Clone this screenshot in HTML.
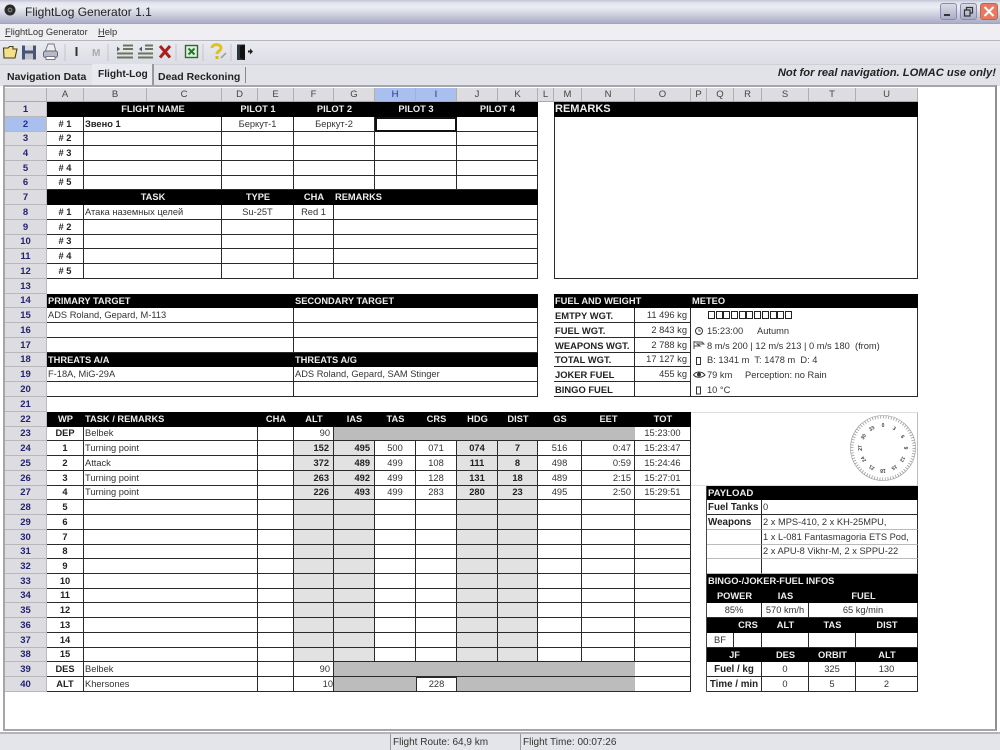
<!DOCTYPE html>
<html><head><meta charset="utf-8"><title>FlightLog Generator 1.1</title>
<style>
html,body{margin:0;padding:0;width:1000px;height:750px;overflow:hidden;background:#fff;font-family:"Liberation Sans","Noto Sans CJK SC",sans-serif;color:#222}
.abs{position:absolute;white-space:nowrap}
#title{left:0;top:0;width:1000px;height:23px;background:linear-gradient(#c3c5d8 0,#e4e5ee 3px,#ecedf3 7px,#cdcedd 15px,#aeb0c8 22px)}
#menu{left:0;top:23px;width:1000px;height:17px;background:#eeeef3;border-top:1px solid #a5a5ad;box-sizing:border-box}
#tool{left:0;top:40px;width:1000px;height:24px;background:linear-gradient(#eaebf0,#dcdde5);border-top:1px solid #b5b5bb;box-sizing:border-box}
#tabs{left:0;top:64px;width:1000px;height:22px;background:#e2e3e9;border-top:1px solid #cfd0d6;box-sizing:border-box}
#sheet{left:3px;top:85px;width:994px;height:646px;background:#fff;border:2px solid #a6a6aa;border-right:2px solid #8f8f94;box-sizing:border-box}
#status{left:0;top:732px;width:1000px;height:18px;background:#e4e5ea;border-top:2px solid #b4b4b8;box-sizing:border-box;font-size:10px;color:#333}
#grid{position:absolute;left:5px;top:88px;width:913px;border-collapse:separate;border-spacing:0;table-layout:fixed;font-size:9.3px;color:#333}
#grid td{padding:0 1px;line-height:11px;overflow:hidden;white-space:nowrap;vertical-align:middle;box-sizing:border-box}
.h14{height:14px}.h15{height:15px}
#grid td.ch{background:#dcdce1;border-right:1px solid #b0b0b4;border-bottom:1px solid #aaa;text-align:center;color:#444;font-size:9.5px}
#grid td.rh{background:#dcdce1;border-bottom:1px solid #b8b8bc;border-right:1px solid #bbb;text-align:center;color:#23236f;font-weight:bold;font-size:9.5px}
#grid td.sel{background:#a9c0ee;color:#2a2a90}
#grid td.k{background:#000;color:#eee;font-weight:bold;text-align:center}
#grid td.kl{background:#000;color:#eee;font-weight:bold;text-align:left}
#grid td.c,#grid td.x{border-right:1px solid #2a2a2a;border-bottom:1px solid #2a2a2a}
#grid td.c{text-align:center}
#grid td.r{border-right:1px solid #2a2a2a;border-bottom:1px solid #2a2a2a;text-align:right;padding-right:3px}
#grid td.wp{border-right:1px solid #2a2a2a;border-bottom:1px solid #2a2a2a;text-align:center;font-weight:bold;color:#222}
#grid td.g{background:#e2e2e2;border-right:1px solid #2a2a2a;border-bottom:1px solid #2a2a2a;text-align:right;font-weight:bold;padding-right:4px;color:#222}
#grid td.gc{text-align:center;padding-right:1px}
#grid td.dk{background:#bcbcbc;border-bottom:1px solid #2a2a2a}
#grid td.t{border-right:1px solid #2a2a2a;border-bottom:1px solid #2a2a2a;font-weight:bold;color:#222;font-size:9.8px}
#grid td.f{font-size:9.4px}
#grid td.sl{outline:2px solid #111;outline-offset:-2px}
#grid td.ll{border-right:1px solid #bbb;border-bottom:1px solid #ddd}
#grid td.pr{border-right:1px solid #444}
#grid td.bx{border:1px solid #2a2a2a;border-top:0}
#grid td.m{border-bottom:1px solid #bbb;border-right:1px solid #2a2a2a}
#grid td.m2{border-bottom:1px solid #bbb;border-right:1px solid #2a2a2a}
.bxs i{display:inline-block;width:5px;height:6px;border:1.5px solid #222;margin-right:.7px}
.mt{font-size:9.3px;color:#333}
</style></head><body>

<div class="abs" id="title">
 <svg class="abs" style="left:3px;top:3px" width="14" height="14" viewBox="0 0 14 14"><circle cx="7" cy="7" r="5.5" fill="#2a2a2a"/><circle cx="7" cy="7" r="2.4" fill="#777"/><circle cx="7" cy="7" r="1" fill="#222"/></svg>
 <div class="abs" style="left:25px;top:4px;font-size:12px;line-height:16px;color:#222">FlightLog Generator 1.1</div>
 <svg class="abs" style="left:939px;top:2px" width="60" height="19" viewBox="0 0 60 19">
  <defs><linearGradient id="bt" x1="0" y1="0" x2="0" y2="1"><stop offset="0" stop-color="#dcdde8"/><stop offset="1" stop-color="#a9abc6"/></linearGradient></defs>
  <rect x="1.5" y="1.5" width="16" height="16" rx="2.5" fill="url(#bt)" stroke="#8a8ca8"/><rect x="5" y="12" width="6" height="2" fill="#333"/>
  <rect x="21.5" y="1.5" width="16" height="16" rx="2.5" fill="url(#bt)" stroke="#8a8ca8"/><path d="M27.5 8V5.5H33.5V11H31M25.5 8H31V14H25.5Z" fill="none" stroke="#333" stroke-width="1.2"/>
  <rect x="41.5" y="1.5" width="17" height="16" rx="2.5" fill="#e8785f" stroke="#b06a5a"/><path d="M45.5 5L54.5 14M54.5 5L45.5 14" stroke="#fff" stroke-width="2"/>
 </svg>
</div>

<div class="abs" id="menu">
 <div class="abs" style="left:5px;top:2px;font-size:9.3px;line-height:13px;color:#333"><u>F</u>lightLog Generator</div>
 <div class="abs" style="left:98px;top:2px;font-size:9.3px;line-height:13px;color:#333"><u>H</u>elp</div>
</div>

<div class="abs" id="tool">
 <svg class="abs" style="left:0;top:1px" width="262" height="22" viewBox="0 0 262 22">
  <path d="M4 16L3.5 6H8L9.5 4.5H13V7H17L15 16Z" fill="#f4e08a" stroke="#4a3e14" stroke-width="1.1"/>
  <path d="M22 3.5H36V17.5H22Z" fill="#4a5474"/><rect x="25" y="3.5" width="8" height="5" fill="#d6d8e2"/><rect x="25" y="11.5" width="8" height="6" fill="#c0c2cc"/>
  <path d="M45 10L48 2H54L56 10Z" fill="#eee" stroke="#778"/><rect x="43.5" y="9" width="14" height="6.5" rx="2" fill="#b6b9c8" stroke="#667"/><rect x="46" y="14.5" width="9" height="3" fill="#fff" stroke="#778"/>
  <rect x="75.5" y="5" width="2" height="9" fill="#333"/>
  <text x="92" y="14" font-family="Liberation Sans" font-size="10" font-weight="bold" fill="#aaa">M</text>
  <path d="M65 2V19M108 2V19M176 2V19M203 2V19M231 2V19" stroke="#c4c5cc"/>
  <path d="M120 7L117 4.5V9.5Z" fill="#555"/><path d="M123 3.5H133M123 7H133M117 11.5H133M117 15.5H133" stroke="#6a7560" stroke-width="2"/>
  <path d="M139 7L142 4.5V9.5Z" fill="#555"/><path d="M145 3.5H153M145 7H153M138 11.5H153M138 15.5H153" stroke="#6a7560" stroke-width="2"/>
  <path d="M160 4L170 15.5M170 4L160 15.5" stroke="#a8201c" stroke-width="3"/>
  <rect x="185.5" y="3.5" width="12" height="12" fill="#dff0dc" stroke="#2d6a2d" stroke-width="1.4"/><path d="M188.5 6.5L194.5 12.5M194.5 6.5L188.5 12.5" stroke="#1c7c2c" stroke-width="2"/>
  <path d="M212 6C212 1.5 221 1.5 221 6C221 9 217 9 217 12" fill="none" stroke="#e0c218" stroke-width="3"/><rect x="215.5" y="14" width="3" height="3" fill="#d8b818"/><path d="M221 16L226 11" stroke="#999" stroke-width="1.5"/>
  <path d="M237 2.5H245V18H237Z" fill="#243a3c"/><path d="M240 4L245 2.5V18L240 16Z" fill="#111"/><path d="M248 8.5H250V6.5L253 9.5L250 12.5V10.5H248Z" fill="#222"/>
 </svg>
</div>

<div class="abs" id="tabs">
 <div class="abs" style="left:92px;top:-1px;width:60px;height:21px;background:#e9eaef;border-right:2px solid #999"></div>
 <div class="abs" style="left:7px;top:5px;font-size:10.5px;line-height:14px;font-weight:bold;color:#222">Navigation Data</div>
 <div class="abs" style="left:98px;top:3px;font-size:10.2px;line-height:14px;font-weight:bold;color:#222">Flight-Log</div>
 <div class="abs" style="left:158px;top:5px;font-size:10.5px;line-height:14px;font-weight:bold;color:#222">Dead Reckoning</div>
 <div class="abs" style="left:245px;top:2px;width:1px;height:16px;background:#888"></div>
 <div class="abs" style="right:4px;top:1px;font-size:11.2px;line-height:15px;font-weight:bold;font-style:italic;color:#222">Not for real navigation. LOMAC use only!</div>
</div>

<div class="abs" id="sheet"></div>

<table id="grid">
<colgroup><col style="width:42px"><col style="width:37px"><col style="width:63px"><col style="width:75px"><col style="width:36px"><col style="width:36px"><col style="width:40px"><col style="width:41px"><col style="width:41px"><col style="width:41px"><col style="width:41px"><col style="width:40px"><col style="width:16px"><col style="width:28px"><col style="width:53px"><col style="width:56px"><col style="width:16px"><col style="width:27px"><col style="width:28px"><col style="width:47px"><col style="width:47px"><col style="width:62px"></colgroup>
<tr class="h14"><td class="ch"></td><td class="ch">A</td><td class="ch">B</td><td class="ch">C</td><td class="ch">D</td><td class="ch">E</td><td class="ch">F</td><td class="ch">G</td><td class="ch sel">H</td><td class="ch sel">I</td><td class="ch">J</td><td class="ch">K</td><td class="ch">L</td><td class="ch">M</td><td class="ch">N</td><td class="ch">O</td><td class="ch">P</td><td class="ch">Q</td><td class="ch">R</td><td class="ch">S</td><td class="ch">T</td><td class="ch">U</td></tr>
<tr class="h15"><td class="rh">1</td><td class="k"></td><td class="k" colspan="2">FLIGHT NAME</td><td class="k" colspan="2">PILOT 1</td><td class="k" colspan="2">PILOT 2</td><td class="k" colspan="2">PILOT 3</td><td class="k" colspan="2">PILOT 4</td><td></td><td class="kl" colspan="9" style="font-size:11px">REMARKS</td></tr>
<tr class="h15"><td class="rh sel">2</td><td class="wp">#&nbsp;1</td><td class="x" colspan="2" style="font-weight:bold;color:#222">Звено 1</td><td class="c" colspan="2">Беркут-1</td><td class="c" colspan="2">Беркут-2</td><td class="c sl" colspan="2"></td><td class="c" colspan="2"></td><td></td><td class="bx" colspan="9" rowspan="11"></td></tr>
<tr class="h14"><td class="rh">3</td><td class="wp">#&nbsp;2</td><td class="x" colspan="2"></td><td class="c" colspan="2"></td><td class="c" colspan="2"></td><td class="c" colspan="2"></td><td class="c" colspan="2"></td><td></td></tr>
<tr class="h15"><td class="rh">4</td><td class="wp">#&nbsp;3</td><td class="x" colspan="2"></td><td class="c" colspan="2"></td><td class="c" colspan="2"></td><td class="c" colspan="2"></td><td class="c" colspan="2"></td><td></td></tr>
<tr class="h15"><td class="rh">5</td><td class="wp">#&nbsp;4</td><td class="x" colspan="2"></td><td class="c" colspan="2"></td><td class="c" colspan="2"></td><td class="c" colspan="2"></td><td class="c" colspan="2"></td><td></td></tr>
<tr class="h14"><td class="rh">6</td><td class="wp">#&nbsp;5</td><td class="x" colspan="2"></td><td class="c" colspan="2"></td><td class="c" colspan="2"></td><td class="c" colspan="2"></td><td class="c" colspan="2"></td><td></td></tr>
<tr class="h15"><td class="rh">7</td><td class="k"></td><td class="k" colspan="2">TASK</td><td class="k" colspan="2">TYPE</td><td class="k">CHA</td><td class="kl" colspan="5">REMARKS</td><td></td></tr>
<tr class="h15"><td class="rh">8</td><td class="wp">#&nbsp;1</td><td class="x" colspan="2">Атака наземных целей</td><td class="c" colspan="2">Su-25T</td><td class="c">Red 1</td><td class="x" colspan="5"></td><td></td></tr>
<tr class="h15"><td class="rh">9</td><td class="wp">#&nbsp;2</td><td class="x" colspan="2"></td><td class="c" colspan="2"></td><td class="c"></td><td class="x" colspan="5"></td><td></td></tr>
<tr class="h14"><td class="rh">10</td><td class="wp">#&nbsp;3</td><td class="x" colspan="2"></td><td class="c" colspan="2"></td><td class="c"></td><td class="x" colspan="5"></td><td></td></tr>
<tr class="h15"><td class="rh">11</td><td class="wp">#&nbsp;4</td><td class="x" colspan="2"></td><td class="c" colspan="2"></td><td class="c"></td><td class="x" colspan="5"></td><td></td></tr>
<tr class="h15"><td class="rh">12</td><td class="wp">#&nbsp;5</td><td class="x" colspan="2"></td><td class="c" colspan="2"></td><td class="c"></td><td class="x" colspan="5"></td><td></td></tr>
<tr class="h15"><td class="rh">13</td><td colspan="21"></td></tr>
<tr class="h14"><td class="rh">14</td><td class="kl" colspan="5">PRIMARY TARGET</td><td class="kl" colspan="6">SECONDARY TARGET</td><td></td><td class="kl" colspan="3">FUEL AND WEIGHT</td><td class="kl" colspan="6">METEO</td></tr>
<tr class="h15"><td class="rh">15</td><td class="x" colspan="5">ADS Roland, Gepard, M-113</td><td class="x" colspan="6"></td><td></td><td class="t f" colspan="2">EMTPY WGT.</td><td class="r">11 496 kg</td><td class="bx" colspan="6" rowspan="6" style="border-left:0"></td></tr>
<tr class="h15"><td class="rh">16</td><td class="x" colspan="5"></td><td class="x" colspan="6"></td><td></td><td class="t f" colspan="2">FUEL WGT.</td><td class="r">2 843 kg</td></tr>
<tr class="h15"><td class="rh">17</td><td class="x" colspan="5"></td><td class="x" colspan="6"></td><td></td><td class="t f" colspan="2">WEAPONS WGT.</td><td class="r">2 788 kg</td></tr>
<tr class="h14"><td class="rh">18</td><td class="kl" colspan="5">THREATS A/A</td><td class="kl" colspan="6">THREATS A/G</td><td></td><td class="t f" colspan="2">TOTAL WGT.</td><td class="r">17 127 kg</td></tr>
<tr class="h15"><td class="rh">19</td><td class="x" colspan="5">F-18A, MiG-29A</td><td class="x" colspan="6">ADS Roland, Gepard, SAM Stinger</td><td></td><td class="t f" colspan="2">JOKER FUEL</td><td class="r">455 kg</td></tr>
<tr class="h15"><td class="rh">20</td><td class="x" colspan="5"></td><td class="x" colspan="6"></td><td></td><td class="t f" colspan="2">BINGO FUEL</td><td class="r"></td></tr>
<tr class="h15"><td class="rh">21</td><td colspan="21"></td></tr>
<tr class="h15"><td class="rh">22</td><td class="k">WP</td><td class="kl" colspan="3">TASK / REMARKS</td><td class="k">CHA</td><td class="k">ALT</td><td class="k">IAS</td><td class="k">TAS</td><td class="k">CRS</td><td class="k">HDG</td><td class="k">DIST</td><td class="k" colspan="2">GS</td><td class="k">EET</td><td class="k">TOT</td><td class="ll" colspan="6" rowspan="5" style="border-top:1px solid #ddd"></td></tr>
<tr class="h14"><td class="rh">23</td><td class="wp">DEP</td><td class="x" colspan="3">Belbek</td><td class="c"></td><td class="r">90</td><td class="dk" colspan="8"></td><td class="c">15:23:00</td></tr>
<tr class="h15"><td class="rh">24</td><td class="wp">1</td><td class="x" colspan="3">Turning point</td><td class="c"></td><td class="g">152</td><td class="g">495</td><td class="c">500</td><td class="c">071</td><td class="g gc">074</td><td class="g gc">7</td><td class="c" colspan="2">516</td><td class="r">0:47</td><td class="c">15:23:47</td></tr>
<tr class="h15"><td class="rh">25</td><td class="wp">2</td><td class="x" colspan="3">Attack</td><td class="c"></td><td class="g">372</td><td class="g">489</td><td class="c">499</td><td class="c">108</td><td class="g gc">111</td><td class="g gc">8</td><td class="c" colspan="2">498</td><td class="r">0:59</td><td class="c">15:24:46</td></tr>
<tr class="h15"><td class="rh">26</td><td class="wp">3</td><td class="x" colspan="3">Turning point</td><td class="c"></td><td class="g">263</td><td class="g">492</td><td class="c">499</td><td class="c">128</td><td class="g gc">131</td><td class="g gc">18</td><td class="c" colspan="2">489</td><td class="r">2:15</td><td class="c">15:27:01</td></tr>
<tr class="h14"><td class="rh">27</td><td class="wp">4</td><td class="x" colspan="3">Turning point</td><td class="c"></td><td class="g">226</td><td class="g">493</td><td class="c">499</td><td class="c">283</td><td class="g gc">280</td><td class="g gc">23</td><td class="c" colspan="2">495</td><td class="r">2:50</td><td class="c">15:29:51</td><td class="pr" rowspan="14"></td><td class="kl" colspan="5" style="font-size:9.6px">PAYLOAD</td></tr>
<tr class="h15"><td class="rh">28</td><td class="wp">5</td><td class="x" colspan="3"></td><td class="c"></td><td class="g"></td><td class="g"></td><td class="c"></td><td class="c"></td><td class="g"></td><td class="g"></td><td class="c" colspan="2"></td><td class="r"></td><td class="c"></td><td class="t" colspan="2">Fuel Tanks</td><td class="x" colspan="3">0</td></tr>
<tr class="h15"><td class="rh">29</td><td class="wp">6</td><td class="x" colspan="3"></td><td class="c"></td><td class="g"></td><td class="g"></td><td class="c"></td><td class="c"></td><td class="g"></td><td class="g"></td><td class="c" colspan="2"></td><td class="r"></td><td class="c"></td><td class="m" colspan="2" style="font-weight:bold;color:#222;font-size:9.8px">Weapons</td><td class="m2" colspan="3">2 x MPS-410, 2 x KH-25MPU,</td></tr>
<tr class="h15"><td class="rh">30</td><td class="wp">7</td><td class="x" colspan="3"></td><td class="c"></td><td class="g"></td><td class="g"></td><td class="c"></td><td class="c"></td><td class="g"></td><td class="g"></td><td class="c" colspan="2"></td><td class="r"></td><td class="c"></td><td class="m" colspan="2"></td><td class="m2" colspan="3">1 x L-081 Fantasmagoria ETS Pod,</td></tr>
<tr class="h14"><td class="rh">31</td><td class="wp">8</td><td class="x" colspan="3"></td><td class="c"></td><td class="g"></td><td class="g"></td><td class="c"></td><td class="c"></td><td class="g"></td><td class="g"></td><td class="c" colspan="2"></td><td class="r"></td><td class="c"></td><td class="m" colspan="2"></td><td class="m2" colspan="3">2 x APU-8 Vikhr-M, 2 x SPPU-22</td></tr>
<tr class="h15"><td class="rh">32</td><td class="wp">9</td><td class="x" colspan="3"></td><td class="c"></td><td class="g"></td><td class="g"></td><td class="c"></td><td class="c"></td><td class="g"></td><td class="g"></td><td class="c" colspan="2"></td><td class="r"></td><td class="c"></td><td class="m" colspan="2"></td><td class="m2" colspan="3"></td></tr>
<tr class="h15"><td class="rh">33</td><td class="wp">10</td><td class="x" colspan="3"></td><td class="c"></td><td class="g"></td><td class="g"></td><td class="c"></td><td class="c"></td><td class="g"></td><td class="g"></td><td class="c" colspan="2"></td><td class="r"></td><td class="c"></td><td class="kl" colspan="5">BINGO-/JOKER-FUEL INFOS</td></tr>
<tr class="h14"><td class="rh">34</td><td class="wp">11</td><td class="x" colspan="3"></td><td class="c"></td><td class="g"></td><td class="g"></td><td class="c"></td><td class="c"></td><td class="g"></td><td class="g"></td><td class="c" colspan="2"></td><td class="r"></td><td class="c"></td><td class="k" colspan="2">POWER</td><td class="k">IAS</td><td class="k" colspan="2">FUEL</td></tr>
<tr class="h15"><td class="rh">35</td><td class="wp">12</td><td class="x" colspan="3"></td><td class="c"></td><td class="g"></td><td class="g"></td><td class="c"></td><td class="c"></td><td class="g"></td><td class="g"></td><td class="c" colspan="2"></td><td class="r"></td><td class="c"></td><td class="c" colspan="2">85%</td><td class="c">570 km/h</td><td class="c" colspan="2">65 kg/min</td></tr>
<tr class="h15"><td class="rh">36</td><td class="wp">13</td><td class="x" colspan="3"></td><td class="c"></td><td class="g"></td><td class="g"></td><td class="c"></td><td class="c"></td><td class="g"></td><td class="g"></td><td class="c" colspan="2"></td><td class="r"></td><td class="c"></td><td class="k"></td><td class="k">CRS</td><td class="k">ALT</td><td class="k">TAS</td><td class="k">DIST</td></tr>
<tr class="h15"><td class="rh">37</td><td class="wp">14</td><td class="x" colspan="3"></td><td class="c"></td><td class="g"></td><td class="g"></td><td class="c"></td><td class="c"></td><td class="g"></td><td class="g"></td><td class="c" colspan="2"></td><td class="r"></td><td class="c"></td><td class="c">BF</td><td class="c"></td><td class="c"></td><td class="c"></td><td class="c"></td></tr>
<tr class="h14"><td class="rh">38</td><td class="wp">15</td><td class="x" colspan="3"></td><td class="c"></td><td class="g"></td><td class="g"></td><td class="c"></td><td class="c"></td><td class="g"></td><td class="g"></td><td class="c" colspan="2"></td><td class="r"></td><td class="c"></td><td class="k" colspan="2">JF</td><td class="k">DES</td><td class="k">ORBIT</td><td class="k">ALT</td></tr>
<tr class="h15"><td class="rh">39</td><td class="wp">DES</td><td class="x" colspan="3">Belbek</td><td class="c"></td><td class="r">90</td><td class="dk" colspan="8"></td><td class="c"></td><td class="t" colspan="2" style="text-align:center">Fuel / kg</td><td class="c">0</td><td class="c">325</td><td class="c">130</td></tr>
<tr class="h15"><td class="rh">40</td><td class="wp">ALT</td><td class="x" colspan="3">Khersones</td><td class="c"></td><td class="r" style="padding-right:0">10</td><td class="dk" colspan="2"></td><td class="c" style="border-left:1px solid #2a2a2a;box-shadow:inset 0 1px 0 #2a2a2a">228</td><td class="dk" colspan="5"></td><td class="c"></td><td class="t" colspan="2" style="text-align:center">Time / min</td><td class="c">0</td><td class="c">5</td><td class="c">2</td></tr>
</table>

<!-- Meteo overlay -->
<div class="abs bxs" style="left:708px;top:311px;line-height:11px;font-size:0"><i></i><i></i><i></i><i></i><i></i><i></i><i></i><i></i><i></i><i></i><i></i></div>
<svg class="abs" style="left:693px;top:324px" width="14" height="72" viewBox="0 0 14 72">
 <circle cx="6" cy="7" r="3.5" fill="none" stroke="#333"/><path d="M6 5V7H8" stroke="#333" fill="none" stroke-width=".8"/>
 <path d="M1 17V25M1 18H9L11 20H4L7 22H1" fill="none" stroke="#444" stroke-width=".9"/>
 <rect x="3.5" y="33.5" width="4" height="7" fill="none" stroke="#333"/>
 <path d="M.5 51C3 47 9 47 12 51C9 54 3 54 .5 51Z" fill="none" stroke="#333"/><circle cx="6" cy="50.5" r="2" fill="#333"/>
 <rect x="3.5" y="63" width="4" height="7" fill="none" stroke="#333"/>
</svg>
<div class="abs mt" style="left:707px;top:325px;line-height:12px">15:23:00</div>
<div class="abs mt" style="left:757px;top:325px;line-height:12px">Autumn</div>
<div class="abs mt" style="left:707px;top:340px;line-height:12px">8 m/s 200 | 12 m/s 213 | 0 m/s 180&nbsp; (from)</div>
<div class="abs mt" style="left:707px;top:354px;line-height:12px">B: 1341 m&nbsp; T: 1478 m&nbsp; D: 4</div>
<div class="abs mt" style="left:707px;top:369px;line-height:12px">79 km</div>
<div class="abs mt" style="left:745px;top:369px;line-height:12px">Perception: no Rain</div>
<div class="abs mt" style="left:707px;top:384px;line-height:12px">10 °C</div>

<!-- Compass -->
<svg class="abs" style="left:848px;top:413px" width="70" height="70" viewBox="-35 -35 70 70">
 <circle r="32.5" fill="#fff" stroke="#999" stroke-width=".6"/>
 <circle r="31" fill="none" stroke="#999" stroke-width="3" stroke-dasharray=".8 1.9"/>
 <g font-family="Liberation Sans" font-size="5" font-weight="bold" fill="#444" text-anchor="middle">
  <text transform="rotate(0) translate(0 -21)">0</text><text transform="rotate(30) translate(0 -21)">3</text><text transform="rotate(60) translate(0 -21)">6</text><text transform="rotate(90) translate(0 -21)">9</text><text transform="rotate(120) translate(0 -21)">12</text><text transform="rotate(150) translate(0 -21)">15</text><text transform="rotate(180) translate(0 -21)">18</text><text transform="rotate(210) translate(0 -21)">21</text><text transform="rotate(240) translate(0 -21)">24</text><text transform="rotate(270) translate(0 -21)">27</text><text transform="rotate(300) translate(0 -21)">30</text><text transform="rotate(330) translate(0 -21)">33</text>
 </g>
</svg>

<div class="abs" id="status">
 <div class="abs" style="left:390px;top:0;width:1px;height:16px;background:#999"></div>
 <div class="abs" style="left:520px;top:0;width:1px;height:16px;background:#999"></div>
 <div class="abs" style="left:393px;top:3px;line-height:12px">Flight Route: 64,9 km</div>
 <div class="abs" style="left:523px;top:3px;line-height:12px">Flight Time: 00:07:26</div>
</div>
</body></html>
